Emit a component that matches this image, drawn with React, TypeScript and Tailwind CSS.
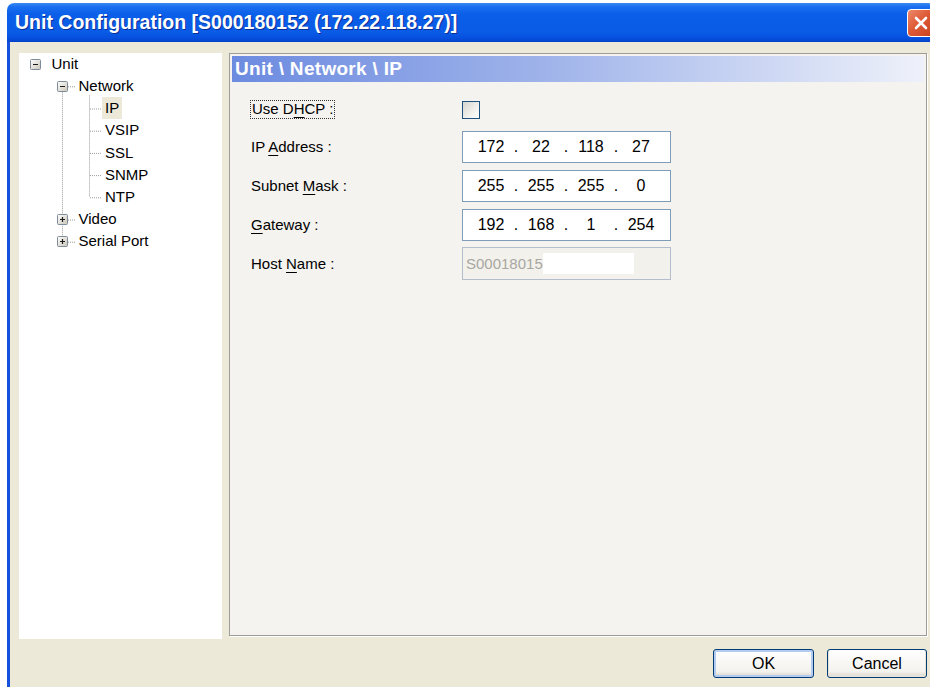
import React from 'react';

type TreeNode = {
  label: string;
  depth: 0 | 1 | 2;
  box?: 'minus' | 'plus';
  selected?: boolean;
};

const tree: TreeNode[] = [
  { label: 'Unit', depth: 0, box: 'minus' },
  { label: 'Network', depth: 1, box: 'minus' },
  { label: 'IP', depth: 2, selected: true },
  { label: 'VSIP', depth: 2 },
  { label: 'SSL', depth: 2 },
  { label: 'SNMP', depth: 2 },
  { label: 'NTP', depth: 2 },
  { label: 'Video', depth: 1, box: 'plus' },
  { label: 'Serial Port', depth: 1, box: 'plus' },
];

const ROW = 22.2;
const indent = ['pl-[11px]', 'pl-[38px]', 'pl-[65px]'];

// expand / collapse square used by the tree view
function ToggleBox({ kind }: { kind: 'minus' | 'plus' }) {
  return (
    <svg width="11" height="11" viewBox="0 0 11 11" className="shrink-0 relative">
      <defs>
        <linearGradient id={`tb-${kind}`} x1="0" y1="0" x2="1" y2="1">
          <stop offset="0" stopColor="#ffffff" />
          <stop offset="1" stopColor="#c9c5b8" />
        </linearGradient>
      </defs>
      <rect x="0.5" y="0.5" width="10" height="10" rx="1" fill={`url(#tb-${kind})`} stroke="#7f8c9b" />
      <path d="M3 5.5h5" stroke="#1d1d1d" strokeWidth="1.2" />
      {kind === 'plus' && <path d="M5.5 3v5" stroke="#1d1d1d" strokeWidth="1.2" />}
    </svg>
  );
}

function TreeLines() {
  const c = (i: number) => i * ROW + ROW / 2;
  const dots = { stroke: '#9c9c9c', strokeWidth: 1, strokeDasharray: '1 1' };
  return (
    <svg className="absolute inset-0 pointer-events-none" width="203" height="586">
      {/* siblings under Unit */}
      <line x1="43.5" y1={c(1)} x2="43.5" y2={c(8)} {...dots} />
      {[1, 7, 8].map((i) => (
        <line key={i} x1="49" y1={c(i) + 0.5} x2="57" y2={c(i) + 0.5} {...dots} />
      ))}
      {/* children of Network */}
      <line x1="70.5" y1={ROW * 2 - 2} x2="70.5" y2={c(6)} {...dots} />
      {[2, 3, 4, 5, 6].map((i) => (
        <line key={i} x1="71" y1={c(i) + 0.5} x2="83" y2={c(i) + 0.5} {...dots} />
      ))}
    </svg>
  );
}

function Tree() {
  return (
    <div className="relative w-[203px] h-[586px] shrink-0 bg-white text-[15px] text-black">
      <TreeLines />
      {tree.map((n) => (
        <div key={n.label} className={`relative flex items-center h-[22.2px] ${indent[n.depth]}`}>
          {n.box ? <ToggleBox kind={n.box} /> : <span className="w-[11px] shrink-0" />}
          {n.depth === 2 ? (
            <span
              className={`ml-[7px] px-[3px] h-[22px] flex items-center ${
                n.selected ? 'bg-[#ECE9D8]' : ''
              }`}
            >
              {n.label}
            </span>
          ) : (
            <span className="ml-[10.5px]">{n.label}</span>
          )}
        </div>
      ))}
    </div>
  );
}

function IpBox({ parts }: { parts: string[] }) {
  return (
    <div className="w-[209px] h-[32.5px] border border-[#7f9db9] bg-white flex items-center pl-[8px] text-[16px] text-black">
      {parts.map((p, i) => (
        <React.Fragment key={i}>
          {i > 0 && <span className="w-[10px] text-center">.</span>}
          <span className="w-[40px] text-center">{p}</span>
        </React.Fragment>
      ))}
    </div>
  );
}

function Key({ children }: { children: React.ReactNode }) {
  return <span className="underline underline-offset-[3px] decoration-1">{children}</span>;
}

function FormRow({ label, children }: { label: React.ReactNode; children: React.ReactNode }) {
  return (
    <div className="flex items-center">
      <div className="w-[211px] shrink-0">{label}</div>
      {children}
    </div>
  );
}

function SettingsPanel() {
  return (
    <div className="w-[698px] h-[583px] border border-[#9d9c96] bg-[#f4f3ef] p-[2px] shadow-[1px_1px_0_#ffffff]">
      <div className="h-[26px] flex items-center pl-[3px] bg-[linear-gradient(to_right,#6c8be0,#9fb3ea_45%,#eef1fa)]">
        <span className="text-white font-bold text-[19px] tracking-[0.3px]">Unit \ Network \ IP</span>
      </div>

      <div className="pl-[19px] pt-[18px] flex flex-col gap-[6.3px] text-[15px] text-black">
        <div className="flex items-center h-[19px] mb-[5.7px]">
          <div className="w-[211px] shrink-0">
            <span className="ml-[-1px] inline-flex items-center h-[19px] px-[1px] border border-dotted border-[#333]">
              Use D<Key>H</Key>CP :
            </span>
          </div>
          <span className="w-[18px] h-[18px] border border-[#1c5180] bg-[linear-gradient(135deg,#d6d5ce,#f2f1ec_60%,#ffffff)]" />
        </div>

        <FormRow label={<>IP <Key>A</Key>ddress :</>}>
          <IpBox parts={['172', '22', '118', '27']} />
        </FormRow>
        <FormRow label={<>Subnet <Key>M</Key>ask :</>}>
          <IpBox parts={['255', '255', '255', '0']} />
        </FormRow>
        <FormRow label={<><Key>G</Key>ateway :</>}>
          <IpBox parts={['192', '168', '1', '254']} />
        </FormRow>
        <FormRow label={<>Host <Key>N</Key>ame :</>}>
          <div className="w-[209px] h-[33px] border border-[#b3bdcc] bg-[#f2f1ec] flex items-center pl-[3px] text-[15px] text-[#a8a7a2]">
            <span>S00018015</span>
            <span className="w-[91px] h-[21px] bg-white" />
          </div>
        </FormRow>
      </div>
    </div>
  );
}

function DialogButton({ children, primary }: { children: React.ReactNode; primary?: boolean }) {
  return (
    <button
      className={`h-[29px] rounded-[3px] border border-[#003c74] bg-[linear-gradient(to_bottom,#ffffff,#f3f2ed_80%,#d8d2c6)] text-[16px] text-black ${
        primary ? 'w-[101px] shadow-[inset_0_0_0_2px_#b4cbf2]' : 'w-[100px] shadow-[inset_0_-1px_0_1px_#e6e3da]'
      }`}
    >
      {children}
    </button>
  );
}

export default function App() {
  return (
    <div className="w-[930px] h-[687px] bg-white overflow-hidden font-['Liberation_Sans',Arial,sans-serif]">
      <div className="ml-[7px] mt-[3px] w-[928px] h-[684px] flex flex-col rounded-t-[7px] overflow-hidden">
        {/* title bar */}
        <div className="h-[39px] shrink-0 flex items-center justify-between pl-[8px] bg-[linear-gradient(to_bottom,#3c8af3_0%,#1a6ef0_10%,#0a5ee8_30%,#0a5be6_75%,#0650de_90%,#0442c8_100%)]">
          <span className="text-white font-bold text-[19.5px] [text-shadow:1px_1px_0_#0c2f96]">
            Unit Configuration [S000180152 (172.22.118.27)]
          </span>
          <div className="w-[28px] h-[28px] rounded-[4px] border border-white bg-[linear-gradient(135deg,#ec8a6c,#de5a36_45%,#c8421e)] flex items-center justify-center">
            <svg width="16" height="16" viewBox="0 0 16 16">
              <path d="M3 3l10 10M13 3L3 13" stroke="#ffffff" strokeWidth="2.6" strokeLinecap="round" />
            </svg>
          </div>
        </div>

        {/* dialog body */}
        <div className="flex-1 flex flex-col bg-[#ECE9D8] border-l-[3px] border-[#1450dc] pl-[9px] pr-[8px] pt-[11px]">
          <div className="flex items-start gap-[7px]">
            <Tree />
            <SettingsPanel />
          </div>
          <div className="flex justify-end gap-[13px] mt-[10px]">
            <DialogButton primary>OK</DialogButton>
            <DialogButton>Cancel</DialogButton>
          </div>
        </div>
      </div>
    </div>
  );
}
